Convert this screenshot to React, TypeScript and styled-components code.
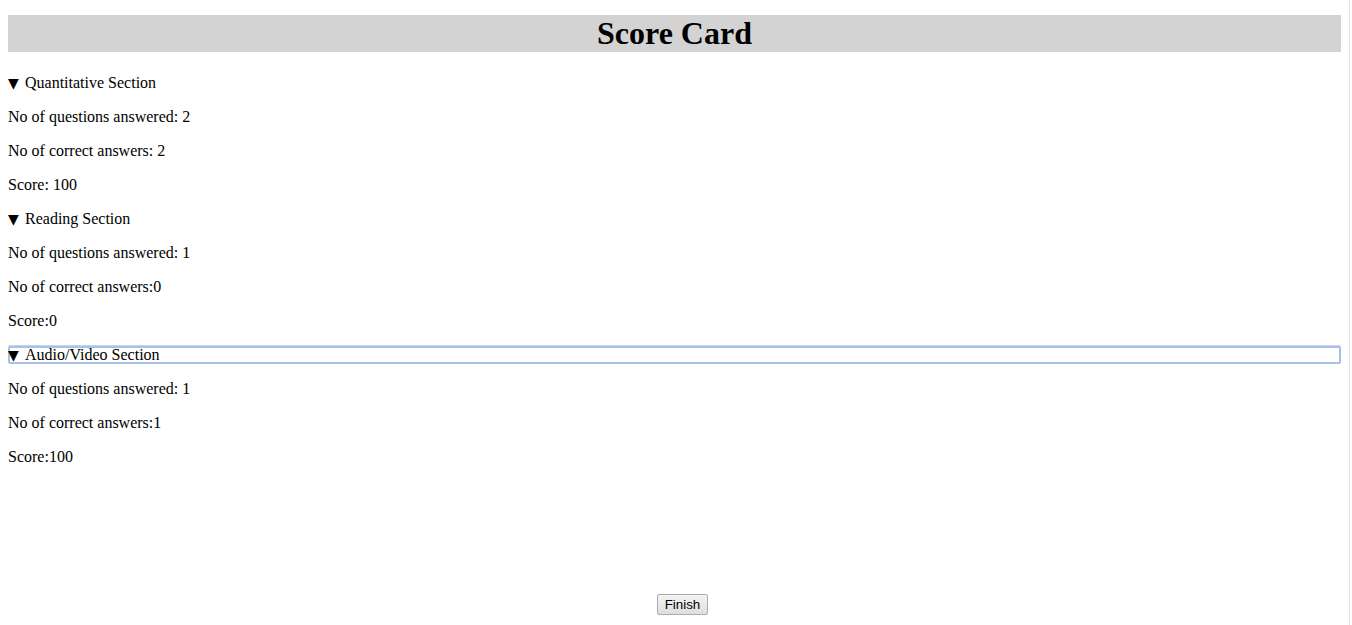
import React from "react";
import styled, { createGlobalStyle } from "styled-components";

const GlobalStyle = createGlobalStyle`
  html, body {
    margin: 0;
    padding: 0;
    background: #ffffff;
  }
  body {
    font-family: "Liberation Serif", "Times New Roman", serif;
    font-size: 16px;
    color: #000000;
  }
`;

const Page = styled.div`
  padding: 15px 11px 0 8px;
`;

const Title = styled.h1`
  margin: 0 0 22px;
  background: #d3d3d3;
  text-align: center;
  font-size: 32px;
  font-weight: bold;
  line-height: 37px;
`;

const Section = styled.details`
  margin: 0;
`;

const Summary = styled.summary<{ $focused?: boolean }>`
  display: block;
  list-style: none;
  cursor: pointer;
  line-height: 18px;
  height: 18px;
  border-radius: 2px;
  box-shadow: ${(p) =>
    p.$focused ? "inset 0 0 0 2px #a9c0e8, 0 -1px 0 0 #c4d4ef" : "none"};
  &::-webkit-details-marker {
    display: none;
  }
`;

const Marker = styled.span`
  display: inline-block;
  width: 17px;
  font-size: 14px;
  line-height: 18px;
  vertical-align: top;
  font-family: "DejaVu Sans", sans-serif;
`;

const Line = styled.p`
  margin: 16px 0;
  line-height: 18px;
`;

const Footer = styled.div`
  margin-top: 128px;
  padding-left: 16px;
  text-align: center;
`;

const Button = styled.button`
  font-family: Arial, "Liberation Sans", sans-serif;
  font-size: 13.33px;
  line-height: 15px;
  height: 21px;
  padding: 1px 7px;
  color: #000;
  border: 1px solid #adadad;
  border-radius: 2px;
  background: linear-gradient(#f4f4f4, #dedede);
  cursor: pointer;
`;

const ScrollEdge = styled.div`
  position: fixed;
  top: 0;
  bottom: 0;
  right: 2px;
  width: 1px;
  background: #e2e2e2;
`;

type SectionData = {
  title: string;
  lines: string[];
  focused?: boolean;
};

const sections: SectionData[] = [
  {
    title: "Quantitative Section",
    lines: ["No of questions answered: 2", "No of correct answers: 2", "Score: 100"],
  },
  {
    title: "Reading Section",
    lines: ["No of questions answered: 1", "No of correct answers:0", "Score:0"],
  },
  {
    title: "Audio/Video Section",
    lines: ["No of questions answered: 1", "No of correct answers:1", "Score:100"],
    focused: true,
  },
];

export default function App() {
  return (
    <>
      <GlobalStyle />
      <Page>
        <Title>Score Card</Title>
        {sections.map((s) => (
          <Section key={s.title} open>
            <Summary $focused={s.focused} onClick={(e) => e.preventDefault()}>
              <Marker>▼</Marker>
              {s.title}
            </Summary>
            {s.lines.map((l) => (
              <Line key={l}>{l}</Line>
            ))}
          </Section>
        ))}
        <Footer>
          <Button type="button">Finish</Button>
        </Footer>
      </Page>
      <ScrollEdge />
    </>
  );
}
